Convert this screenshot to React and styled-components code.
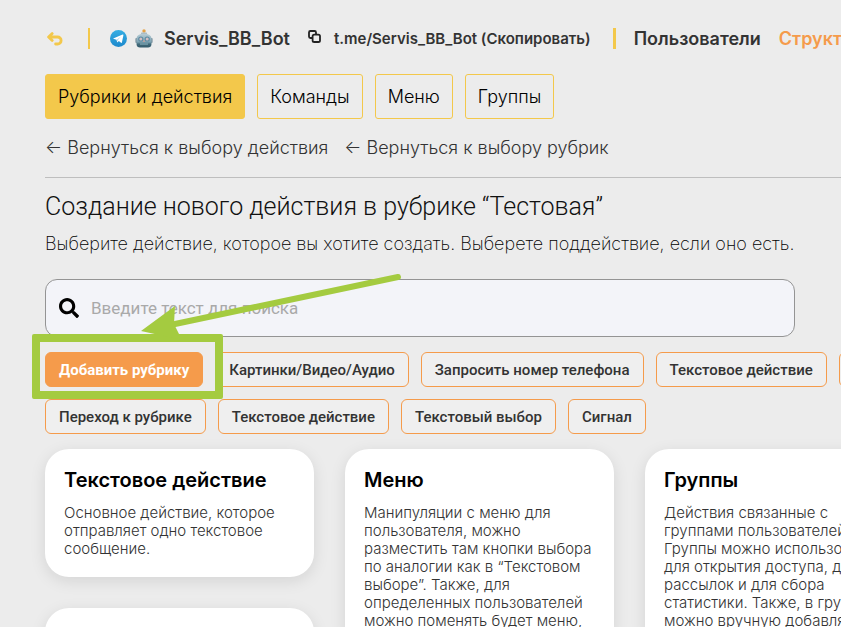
import React, { useState } from 'react'
import styled, { createGlobalStyle } from 'styled-components'
import { FaSearch } from 'react-icons/fa'

const tabs = ['Рубрики и действия', 'Команды', 'Меню', 'Группы']

const filterRows = [
  ['Добавить рубрику', 'Картинки/Видео/Аудио', 'Запросить номер телефона', 'Текстовое действие', 'Переход'],
  ['Переход к рубрике', 'Текстовое действие', 'Текстовый выбор', 'Сигнал'],
]

const columns = [
  [
    { title: 'Текстовое действие', text: 'Основное действие, которое отправляет одно текстовое сообщение.' },
    { title: '', text: '' },
  ],
  [
    {
      title: 'Меню',
      text: 'Манипуляции с меню для пользователя, можно разместить там кнопки выбора по аналогии как в “Текстовом выборе”. Также, для определенных пользователей можно поменять будет меню,',
    },
  ],
  [
    {
      title: 'Группы',
      text: 'Действия связанные с группами пользователей. Группы можно использовать для открытия доступа, для рассылок и для сбора статистики. Также, в группы можно вручную добавлять',
    },
  ],
]

const BackIcon = () => (
  <svg width="16" height="14" viewBox="0 0 16 14" fill="none" stroke="#f3c84b" strokeWidth="2.8" strokeLinecap="round" strokeLinejoin="round">
    <path d="M5.2 1.6 1.6 5l3.6 3.4M2 5h8.6a3.5 3.5 0 0 1 0 7H8.6" />
  </svg>
)

const TelegramIcon = () => (
  <svg width="17" height="17" viewBox="0 0 17 17">
    <defs>
      <linearGradient id="tg" x1="0" y1="0" x2="0" y2="1">
        <stop offset="0" stopColor="#35aee3" />
        <stop offset="1" stopColor="#1c88cc" />
      </linearGradient>
    </defs>
    <circle cx="8.5" cy="8.5" r="8.5" fill="url(#tg)" />
    <path d="M3.2 8.5 12.6 4.6c.6-.2.9.1.8.7l-1.5 7.2c-.1.5-.5.6-.9.3L8.8 11.1l-1.2 1.1c-.2.2-.5.1-.5-.2l-.6-2.3-3.2-.9z" fill="#fff" />
    <path d="M6.6 9.7 11 6.6 7.8 10.2l-.5 1.6z" fill="#b5d8ee" />
  </svg>
)

const RobotIcon = () => (
  <svg width="18" height="19" viewBox="0 0 18 19">
    <defs>
      <linearGradient id="robot" x1="0" y1="0" x2="0" y2="1">
        <stop offset="0" stopColor="#b9cdd6" />
        <stop offset="0.6" stopColor="#7da3b3" />
        <stop offset="0.75" stopColor="#426a7a" />
        <stop offset="1" stopColor="#32596a" />
      </linearGradient>
    </defs>
    <circle cx="9" cy="2" r="1.7" fill="#e5a247" />
    <path d="M6.4 3.6h5.2l.8 1.8H5.6z" fill="#a8b7bf" />
    <rect x="0.4" y="9" width="2.2" height="5" rx="1" fill="#7b909c" />
    <rect x="15.4" y="9" width="2.2" height="5" rx="1" fill="#7b909c" />
    <path d="M1.5 10C1.5 6.4 4.4 4.8 9 4.8s7.5 1.6 7.5 5.2v5c0 2.4-1.5 3.5-3.5 3.5H5c-2 0-3.5-1.1-3.5-3.5z" fill="url(#robot)" />
    <circle cx="5.8" cy="10" r="2.6" fill="#5b8ba3" />
    <circle cx="12.2" cy="10" r="2.6" fill="#5b8ba3" />
    <circle cx="5.8" cy="10" r="1.5" fill="#d3bcc0" />
    <circle cx="12.2" cy="10" r="1.5" fill="#d3bcc0" />
    <path d="m9 10.8-1.2 2h2.4z" fill="#cf9a92" />
    <path d="M5 14.4h8v1.3H5z" fill="#7ba4b2" />
  </svg>
)

const CopyIcon = () => (
  <svg width="13" height="13" viewBox="0 0 13 13" fill="none" stroke="#222" strokeWidth="1.8" strokeLinejoin="round">
    <path d="M4.6 8H2.4A1.4 1.4 0 0 1 1 6.6V2.4A1.4 1.4 0 0 1 2.4 1h4.2A1.4 1.4 0 0 1 8 2.4V4.4" />
    <rect x="4.6" y="4.6" width="7.4" height="7.4" rx="1.6" />
  </svg>
)

export default function App() {
  const [search, setSearch] = useState('')
  const [activeTab, setActiveTab] = useState(tabs[0])

  return (
    <Page>
      <GlobalStyle />
      <TopBar>
        <IconButton aria-label="Назад"><BackIcon /></IconButton>
        <Divider $gap={20} />
        <BotName>
          <TelegramIcon />
          <RobotIcon />
          <span>Servis_BB_Bot</span>
        </BotName>
        <CopyButton>
          <CopyIcon />
          <span>t.me/Servis_BB_Bot (Скопировать)</span>
        </CopyButton>
        <Divider $wide $gap={18} />
        <NavLink href="#users">Пользователи</NavLink>
        <NavLink href="#structure" $active>Структура</NavLink>
      </TopBar>

      <Tabs>
        {tabs.map((tab) => (
          <Tab key={tab} $active={tab === activeTab} onClick={() => setActiveTab(tab)}>{tab}</Tab>
        ))}
      </Tabs>

      <BackLinks>
        <BackLink href="#actions">← Вернуться к выбору действия</BackLink>
        <BackLink href="#rubrics">← Вернуться к выбору рубрик</BackLink>
      </BackLinks>

      <Title>Создание нового действия в рубрике “Тестовая”</Title>
      <Subtitle>Выберите действие, которое вы хотите создать. Выберете поддействие, если оно есть.</Subtitle>

      <SearchBox>
        <FaSearch size={20} color="#000" />
        <SearchInput
          type="text"
          aria-label="Поиск"
          placeholder="Введите текст для поиска"
          value={search}
          onChange={(e) => setSearch(e.target.value)}
        />
      </SearchBox>

      <Filters>
        {filterRows.map((row, i) => (
          <FilterRow key={i}>
            {row.map((name, j) => {
              const primary = i === 0 && j === 0
              if (!primary) return <Filter key={j}>{name}</Filter>
              return (
                <Highlighted key={j}>
                  <Filter $primary>{name}</Filter>
                  <HighlightFrame />
                  <Arrow width="262" height="70" viewBox="0 0 262 70" aria-hidden="true">
                    <path d="M257 5 34 52" stroke="#a4cb40" strokeWidth="6" strokeLinecap="round" />
                    <path d="M0 59 34 34 33 52 41 68z" fill="#a4cb40" />
                  </Arrow>
                </Highlighted>
              )
            })}
          </FilterRow>
        ))}
      </Filters>

      <Cards>
        {columns.map((cards, i) => (
          <Column key={i}>
            {cards.map((card, j) => (
              <Card key={j}>
                {card.title && <CardTitle>{card.title}</CardTitle>}
                <CardText>{card.text}</CardText>
              </Card>
            ))}
          </Column>
        ))}
      </Cards>
    </Page>
  )
}

const GlobalStyle = createGlobalStyle`
  * {
    box-sizing: border-box;
  }
  html {
    overflow: hidden;
  }
  body {
    margin: 0;
    background: #ececec;
    font-family: Inter, sans-serif;
    color: #333;
  }
  button {
    font-family: inherit;
    cursor: pointer;
  }
`

const Page = styled.main`
  height: 100vh;
  padding: 24px 0 0 45px;
  overflow: hidden;
`

const TopBar = styled.nav`
  display: flex;
  align-items: center;
  height: 29px;
  white-space: nowrap;
`

const IconButton = styled.button`
  display: flex;
  margin-right: 3px;
  padding: 0 2px;
  border: 0;
  background: none;
`

const Divider = styled.span`
  flex: none;
  width: ${({ $wide }) => ($wide ? '3px' : '2px')};
  height: 21px;
  margin: 0 ${({ $gap }) => $gap}px;
  background: #f3c84b;
`

const BotName = styled.div`
  display: flex;
  align-items: center;
  gap: 8px;
  font-size: 18px;
  font-weight: 600;

  span {
    margin-left: 3px;
  }
`

const CopyButton = styled.button`
  display: flex;
  align-items: center;
  gap: 13px;
  margin: 0 4px 0 18px;
  padding: 0;
  border: 0;
  background: none;
  color: #333;
  font-size: 15px;
  font-weight: 600;

  svg {
    margin-bottom: 4px;
  }
`

const NavLink = styled.a`
  margin-right: 18px;
  color: ${({ $active }) => ($active ? '#f59b4b' : '#333')};
  font-size: 18px;
  font-weight: 600;
  text-decoration: none;
`

const Tabs = styled.div`
  display: flex;
  gap: 12px;
  margin-top: 21px;
`

const Tab = styled.button`
  height: 45px;
  padding: 0 12px;
  border: 1px solid #f3c84b;
  border-radius: 3px;
  background: ${({ $active }) => ($active ? '#f3c84b' : 'transparent')};
  color: #000;
  font-size: 18px;
  font-weight: 300;
`

const BackLinks = styled.div`
  display: flex;
  gap: 16px;
  margin-top: 18px;
  padding-bottom: 18px;
  border-bottom: 1px solid #bebebe;
`

const BackLink = styled.a`
  color: #333;
  font-size: 18px;
  font-weight: 300;
  line-height: 22px;
  text-decoration: none;
  white-space: nowrap;
`

const Title = styled.h1`
  margin: 14px 0 0;
  color: #111;
  font-family: Roboto, sans-serif;
  font-size: 25px;
  font-weight: 300;
  line-height: 30px;
`

const Subtitle = styled.p`
  margin: 11px 0 0;
  color: #000;
  font-size: 18px;
  font-weight: 200;
  line-height: 22px;
`

const SearchBox = styled.label`
  display: flex;
  align-items: center;
  gap: 12px;
  max-width: 750px;
  height: 58px;
  margin-top: 24px;
  padding: 0 13px;
  border: 1px solid #949494;
  border-radius: 12px;
  background: #f3f4f9;
`

const SearchInput = styled.input`
  flex: 1;
  padding: 0;
  border: 0;
  outline: 0;
  background: none;
  font-family: Roboto, sans-serif;
  font-size: 17px;

  &::placeholder {
    color: #a9a9a9;
  }
`

const Filters = styled.div`
  display: grid;
  gap: 12px;
  margin-top: 15px;
`

const FilterRow = styled.div`
  display: flex;
  gap: 12px;
`

const Filter = styled.button`
  flex: none;
  height: 35px;
  padding: 0 13px;
  border: 1px solid #f59b4b;
  border-radius: 6px;
  background: ${({ $primary }) => ($primary ? '#f59b4b' : '#efefef')};
  color: ${({ $primary }) => ($primary ? '#fff' : '#333')};
  font-family: Roboto, sans-serif;
  font-size: 15px;
  font-weight: ${({ $primary }) => ($primary ? 700 : 500)};
  white-space: nowrap;
`

const Highlighted = styled.div`
  position: relative;
  flex: none;
`

const HighlightFrame = styled.div`
  position: absolute;
  z-index: 1;
  inset: -18px -20px -12px -13px;
  border: 8px solid #a4cb40;
  border-radius: 2px;
  pointer-events: none;
`

const Arrow = styled.svg`
  position: absolute;
  z-index: 1;
  top: -80px;
  left: 96px;
  pointer-events: none;
`

const Cards = styled.div`
  display: flex;
  gap: 31px;
  margin-top: 15px;
`

const Column = styled.div`
  display: flex;
  flex: none;
  flex-direction: column;
  gap: 31px;
  width: 269px;
`

const Card = styled.article`
  min-height: 100px;
  padding: 19px;
  border-radius: 24px;
  background: #fff;
  box-shadow: 0 4px 16px rgba(0, 0, 0, 0.1);
`

const CardTitle = styled.h2`
  margin: 0 0 11px;
  color: #000;
  font-size: 20px;
  font-weight: 600;
  line-height: 25px;
`

const CardText = styled.p`
  margin: 0;
  font-size: 15px;
  font-weight: 300;
  line-height: 18px;
`
